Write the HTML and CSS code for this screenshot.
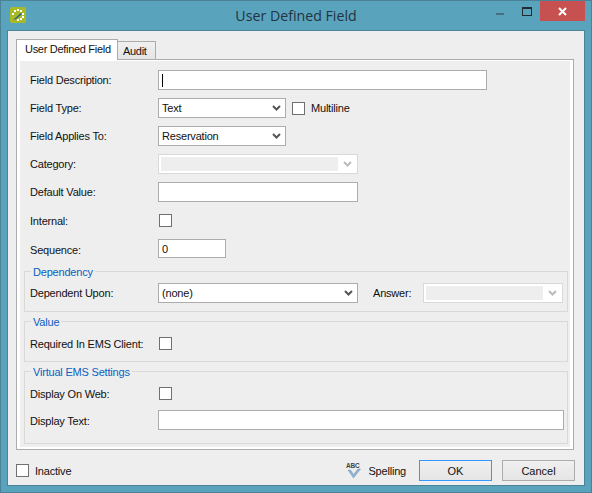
FILE: index.html
```html
<!DOCTYPE html>
<html lang="en">
<head>
    <meta charset="UTF-8">
    <meta name="viewport" content="width=device-width, initial-scale=1.0">
    <title>User Defined Field</title>
    <link rel="stylesheet" href="styles.css">
</head>
<body>
    <div class="window">
        <div class="titlebar">
            <div class="logo">
                <svg width="16" height="16" viewBox="0 0 16 16">
                    <rect width="16" height="16" rx="2" fill="#a8ba28"/>
                    <g fill="#fff">
                        <rect x="7" y="2" width="2" height="2"/>
                        <rect x="10" y="3" width="2" height="2"/>
                        <rect x="12" y="6" width="2" height="2"/>
                        <rect x="12" y="9" width="2" height="2"/>
                        <rect x="10" y="11" width="2" height="2"/>
                        <rect x="7" y="12" width="2" height="2"/>
                        <rect x="4" y="3" width="2" height="2"/>
                        <rect x="2" y="6" width="2" height="2"/>
                    </g>
                    <path d="M3 13 L11 6 L12 7 L6 12 Z" fill="#1d5a8c"/>
                </svg>
            </div>
            <div class="title">User Defined Field</div>
            <div class="controls">
                <div class="control">
                    <svg width="26" height="20" viewBox="0 0 26 20"><rect x="9" y="12" width="8" height="2" fill="#44707f"/></svg>
                </div>
                <div class="control">
                    <svg width="27" height="20" viewBox="0 0 27 20"><rect x="9.5" y="7.5" width="9" height="7" fill="none" stroke="#222c33"/><rect x="9" y="6" width="10" height="2" fill="#222c33"/></svg>
                </div>
                <div class="control close">
                    <svg width="45" height="20" viewBox="0 0 45 20"><path d="M19 7 L26 14 M26 7 L19 14" stroke="#fff" stroke-width="2"/></svg>
                </div>
            </div>
        </div>

        <div class="client">
            <div class="tabs">
                <div class="tab active">User Defined Field</div>
                <div class="tab">Audit</div>
            </div>

            <div class="tabpanel">
                <div class="page">
                    <div class="fields">
                        <label>Field Description:</label>
                        <div class="box w-desc"><span class="caret"></span></div>

                        <label>Field Type:</label>
                        <div class="inline">
                            <div class="box combo w-short">Text
                                <svg class="chev" width="9" height="6" viewBox="0 0 9 6"><path d="M1 1 L4.5 4.5 L8 1" fill="none" stroke="#555" stroke-width="2"/></svg>
                            </div>
                            <span class="check"></span>
                            <span>Multiline</span>
                        </div>

                        <label>Field Applies To:</label>
                        <div class="box combo w-short">Reservation
                            <svg class="chev" width="9" height="6" viewBox="0 0 9 6"><path d="M1 1 L4.5 4.5 L8 1" fill="none" stroke="#555" stroke-width="2"/></svg>
                        </div>

                        <label>Category:</label>
                        <div class="box combo disabled w-mid">
                            <span class="blank"></span>
                            <svg class="chev" width="9" height="6" viewBox="0 0 9 6"><path d="M1 1 L4.5 4.5 L8 1" fill="none" stroke="#bbb" stroke-width="2"/></svg>
                        </div>

                        <label>Default Value:</label>
                        <div class="box w-mid"></div>

                        <label>Internal:</label>
                        <div class="check-cell"><span class="check"></span></div>

                        <label class="low">Sequence:</label>
                        <div class="box w-seq">0</div>
                    </div>

                    <fieldset class="group dependency">
                        <legend>Dependency</legend>
                        <div class="group-row">
                            <label>Dependent Upon:</label>
                            <div class="box combo w-mid">(none)
                                <svg class="chev" width="9" height="6" viewBox="0 0 9 6"><path d="M1 1 L4.5 4.5 L8 1" fill="none" stroke="#555" stroke-width="2"/></svg>
                            </div>
                            <label class="answer-label">Answer:</label>
                            <div class="box combo disabled w-answer">
                                <span class="blank"></span>
                                <svg class="chev" width="9" height="6" viewBox="0 0 9 6"><path d="M1 1 L4.5 4.5 L8 1" fill="none" stroke="#bbb" stroke-width="2"/></svg>
                            </div>
                        </div>
                    </fieldset>

                    <fieldset class="group value">
                        <legend>Value</legend>
                        <div class="group-row">
                            <label>Required In EMS Client:</label>
                            <div class="check-cell"><span class="check"></span></div>
                        </div>
                    </fieldset>

                    <fieldset class="group virtual">
                        <legend>Virtual EMS Settings</legend>
                        <div class="group-row">
                            <label>Display On Web:</label>
                            <div class="check-cell"><span class="check"></span></div>
                        </div>
                        <div class="group-row second">
                            <label class="low">Display Text:</label>
                            <div class="box w-display"></div>
                        </div>
                    </fieldset>
                </div>
            </div>

            <div class="footer">
                <span class="check"></span>
                <span class="inactive">Inactive</span>
                <div class="spelling">
                    <svg width="16" height="18" viewBox="0 0 16 18">
                        <text x="0" y="6" class="abc">ABC</text>
                        <path d="M2 8 L7.5 16 L14.5 7 L12 7 L7.5 12.5 L4.5 8 Z" fill="#8fb3d3" stroke="#6f97b8" stroke-width="0.5"/>
                    </svg>
                    <span>Spelling</span>
                </div>
                <button class="btn default" type="button">OK</button>
                <button class="btn" type="button">Cancel</button>
            </div>
        </div>
    </div>
</body>
</html>
```

FILE: styles.css
```css
* {
    box-sizing: border-box;
}
body {
    margin: 0;
    font-family: "Liberation Sans", Arial, sans-serif;
    font-size: 11px;
    letter-spacing: -0.2px;
    color: #111;
}
label {
    display: block;
}
.low {
    padding-top: 2px;
}

.window {
    width: 592px;
    height: 493px;
    padding: 0 6px 6px;
    background-color: #5aa3bd;
    border: 1px solid #4a8297;
}

.titlebar {
    display: grid;
    grid-template-columns: 1fr auto 1fr;
    height: 29px;
}
.logo {
    padding: 6px 0 0 3px;
}
.title {
    font-family: "Open Sans", sans-serif;
    font-size: 14.2px;
    letter-spacing: 0;
    line-height: 29px;
    color: #23343f;
}
.controls {
    display: flex;
    justify-content: flex-end;
    align-items: flex-start;
}
.control {
    height: 20px;
}
.close {
    background-color: #c75050;
}

.client {
    height: 456px;
    padding: 8px 9px 0 8px;
    background-color: #eeeeee;
    border: 1px solid #4a8297;
}

.tabs {
    display: flex;
    align-items: flex-end;
    height: 20px;
}
.tab {
    width: 38px;
    height: 18px;
    padding-top: 3px;
    padding-left: 5px;
    white-space: nowrap;
    letter-spacing: -0.3px;
    background: linear-gradient(#f0f0f0, #e5e5e5);
    border: 1px solid #acacac;
    border-bottom: none;
    border-left: none;
}
.tab.active {
    position: relative;
    z-index: 1;
    width: 102px;
    height: 21px;
    margin-bottom: -1px;
    padding-left: 8px;
    background: #fff;
    border-left: 1px solid #acacac;
}

.tabpanel {
    width: 558px;
    height: 391px;
    padding: 1px 3px 2px;
    background-color: #fff;
    border: 1px solid #acacac;
}
.page {
    height: 100%;
    padding: 9px 2px 0 4px;
    background-color: #eeeeee;
}

.fields {
    display: grid;
    grid-template-columns: 128px auto;
    justify-items: start;
    align-items: center;
    row-gap: 8px;
    padding-left: 6px;
}

.box {
    height: 20px;
    padding: 3px;
    line-height: 12px;
    background-color: #fff;
    border: 1px solid #acacac;
}
.w-desc {
    width: 329px;
}
.w-short {
    width: 128px;
}
.w-mid {
    width: 200px;
}
.w-seq {
    width: 68px;
    height: 19px;
}
.w-answer {
    width: 140px;
    margin-top: -1px;
}
.w-display {
    width: 406px;
}
.caret {
    display: block;
    width: 1px;
    height: 13px;
    background-color: #000;
}

.combo {
    display: flex;
    justify-content: space-between;
    align-items: center;
    padding: 0 4px 1px 3px;
}
.chev {
    flex: none;
}
.disabled {
    padding: 2px 5px 2px 2px;
    border-color: #d9d9d9;
}
.blank {
    align-self: stretch;
    width: 177px;
    background-color: #eeeeee;
}
.w-answer .blank {
    width: 117px;
}

.inline {
    display: flex;
    align-items: center;
    gap: 6px;
}
.check-cell {
    display: flex;
    align-items: center;
    height: 21px;
    padding-left: 1px;
}
.check {
    display: block;
    flex: none;
    width: 13px;
    height: 13px;
    background-color: #fff;
    border: 1px solid #707070;
}

.group {
    margin: 0;
    padding: 0;
    min-width: 0;
    border: 1px solid #d9d9d9;
}
.group legend {
    margin-left: 6px;
    padding: 2px 2px 0;
    line-height: 13px;
    color: #0a5fc4;
}
.group-row {
    display: grid;
    grid-template-columns: 128px auto;
    justify-content: start;
    align-items: center;
    padding-left: 5px;
    padding-top: 4px;
}
.dependency {
    height: 48px;
    margin-top: 6px;
}
.dependency .group-row {
    grid-template-columns: 128px 200px 65px auto;
}
.answer-label {
    padding-left: 15px;
}
.value {
    height: 48px;
    margin-top: 2px;
}
.virtual {
    height: 80px;
    margin-top: 2px;
}
.virtual .second {
    padding-top: 6px;
}

.footer {
    display: flex;
    align-items: center;
    height: 35px;
    padding-top: 6px;
}
.inactive {
    margin-left: 6px;
}
.spelling {
    display: flex;
    align-items: center;
    gap: 6px;
    margin-left: auto;
    margin-right: 13px;
}
.abc {
    font-family: "Liberation Sans", sans-serif;
    font-size: 6.5px;
    font-weight: bold;
    fill: #444;
}
.btn {
    width: 73px;
    height: 21px;
    padding: 0;
    font-family: "Liberation Sans", Arial, sans-serif;
    font-size: 11px;
    color: #111;
    background: linear-gradient(#f0f0f0, #e5e5e5);
    border: 1px solid #acacac;
}
.default {
    margin-right: 10px;
    border-color: #3399ff;
}
```
